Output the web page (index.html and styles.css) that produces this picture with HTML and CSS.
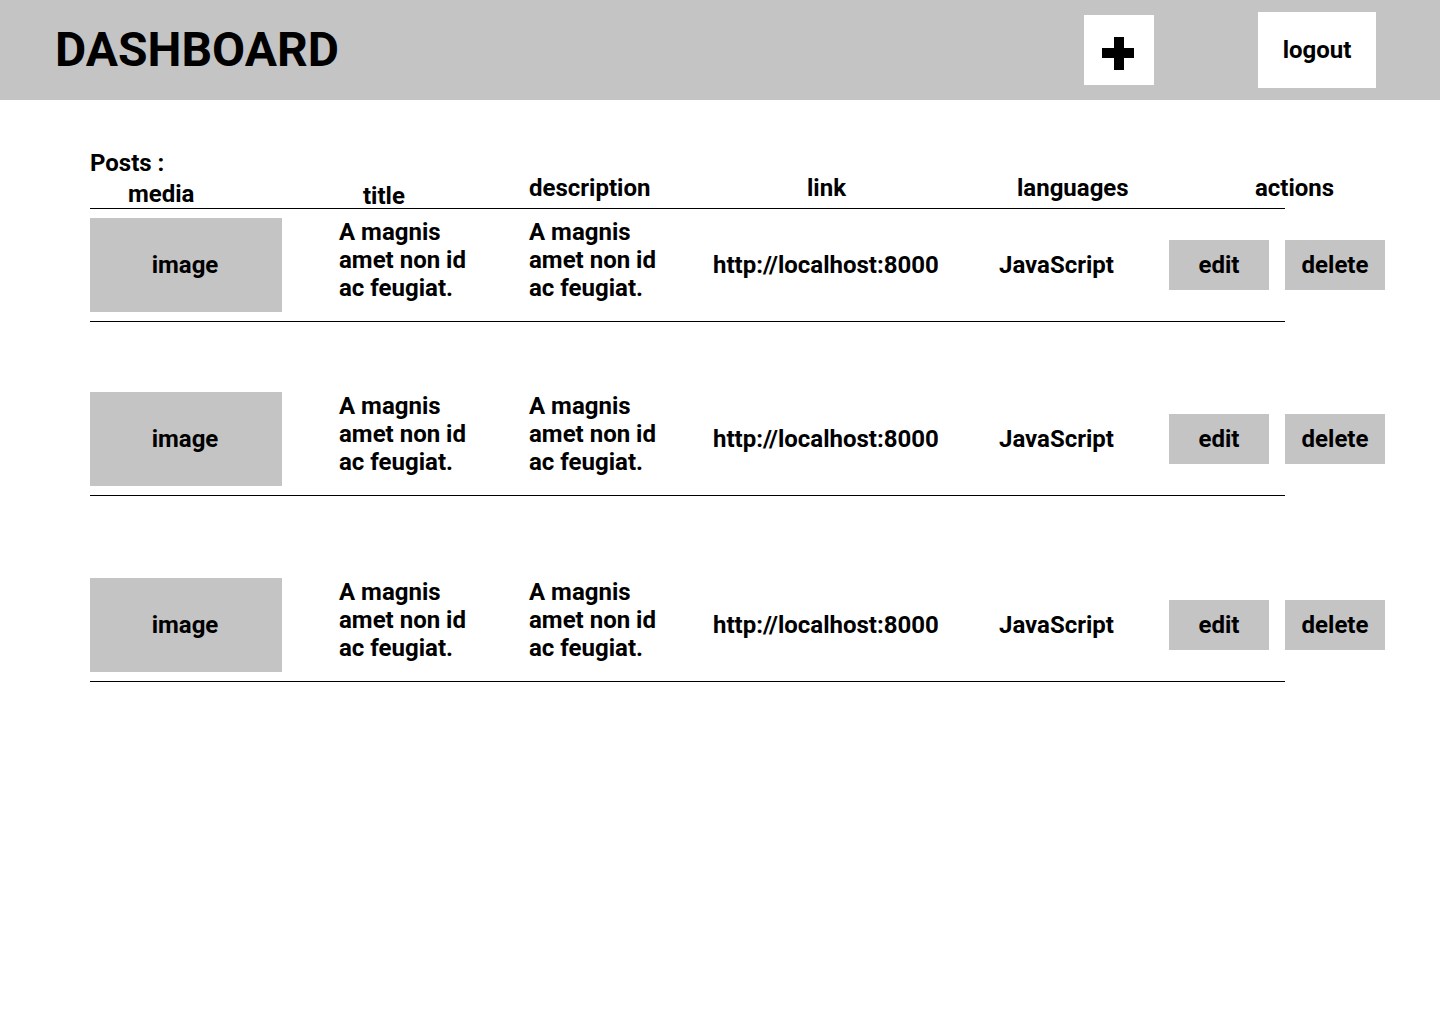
FILE: index.html
```html
<!DOCTYPE html>
<html lang="en">
<head>
<meta charset="utf-8">
<title>Dashboard</title>
<link rel="stylesheet" href="styles.css">
</head>
<body>
<header class="topbar">
  <h1 class="brand">DASHBOARD</h1>
  <div class="topbar-actions">
    <button class="add-btn" aria-label="add">
      <svg class="plus" width="32" height="33" viewBox="0 0 32 33"><rect x="12" y="0" width="10" height="33" fill="#000"/><rect x="0" y="11" width="32" height="10" fill="#000"/></svg>
    </button>
    <button class="logout-btn">logout</button>
  </div>
</header>
<main class="content">
  <div class="posts-label">Posts :</div>
  <div class="table">
    <div class="thead">
      <div class="th th-media">media</div>
      <div class="th th-title">title</div>
      <div class="th th-desc">description</div>
      <div class="th th-link">link</div>
      <div class="th th-lang">languages</div>
      <div class="th th-actions">actions</div>
    </div>
    <div class="row">
      <div class="media-box">image</div>
      <div class="cell-text">A magnis<br>amet non id<br>ac feugiat.</div>
      <div class="cell-text">A magnis<br>amet non id<br>ac feugiat.</div>
      <div class="cell-single">http://localhost:8000</div>
      <div class="cell-single">JavaScript</div>
      <button class="act-btn">edit</button>
      <button class="act-btn">delete</button>
    </div>
    <div class="row row-second">
      <div class="media-box">image</div>
      <div class="cell-text">A magnis<br>amet non id<br>ac feugiat.</div>
      <div class="cell-text">A magnis<br>amet non id<br>ac feugiat.</div>
      <div class="cell-single">http://localhost:8000</div>
      <div class="cell-single">JavaScript</div>
      <button class="act-btn">edit</button>
      <button class="act-btn">delete</button>
    </div>
    <div class="row row-third">
      <div class="media-box">image</div>
      <div class="cell-text">A magnis<br>amet non id<br>ac feugiat.</div>
      <div class="cell-text">A magnis<br>amet non id<br>ac feugiat.</div>
      <div class="cell-single">http://localhost:8000</div>
      <div class="cell-single">JavaScript</div>
      <button class="act-btn">edit</button>
      <button class="act-btn">delete</button>
    </div>
  </div>
</main>
</body>
</html>
```
FILE: styles.css
```css
* { box-sizing: border-box; }
html, body { margin: 0; padding: 0; background: #fff; }
body {
  font-family: Roboto, "Liberation Sans", sans-serif;
  font-weight: 700;
  font-size: 24px;
  color: #000;
  width: 1440px;
  min-height: 1024px;
}
button {
  font: inherit;
  color: inherit;
  border: 0;
  padding: 0;
  margin: 0;
  cursor: pointer;
}

.topbar {
  height: 100px;
  background: #c4c4c4;
  display: flex;
  align-items: center;
  justify-content: space-between;
  padding: 0 64px 0 55px;
}
.brand {
  margin: 0;
  font-size: 48px;
  font-weight: 700;
  line-height: 56px;
}
.topbar-actions {
  display: flex;
  align-items: center;
  gap: 104px;
}
.add-btn {
  width: 70px;
  height: 70px;
  background: #fff;
  display: flex;
  align-items: center;
  justify-content: center;
}
.plus { display: block; margin-top: 6px; margin-left: -2px; }
.logout-btn {
  width: 118px;
  height: 76px;
  background: #fff;
  line-height: 28px;
}

.content {
  padding: 51px 0 0 90px;
}
.posts-label {
  line-height: 24px;
}
.table { width: 1195px; }
.thead {
  height: 34px;
  border-bottom: 1px solid #000;
  display: grid;
  grid-template-columns: 249px 190px 184px 286px 170px 116px;
  align-items: start;
  line-height: 24px;
}
.th-media { padding: 7px 0 0 38px; }
.th-title { padding: 9px 0 0 24px; }
.th-desc { padding-top: 1px; }
.th-link { padding: 1px 0 0 94px; }
.th-lang { padding: 1px 0 0 18px; }
.th-actions { padding: 1px 0 0 86px; white-space: nowrap; }

.row {
  width: 1195px;
  display: grid;
  grid-template-columns: 249px 190px 184px 286px 170px 116px 100px;
  align-items: center;
  padding: 9px 0;
  border-bottom: 1px solid #000;
  line-height: 28px;
}
.row-second { margin-top: 61px; }
.row-third { margin-top: 73px; }
.media-box {
  width: 192px;
  height: 94px;
  background: #c4c4c4;
  display: flex;
  align-items: center;
  justify-content: center;
  padding-right: 2px;
}
.cell-text { align-self: start; }
.cell-single { white-space: nowrap; }
.act-btn {
  width: 100px;
  height: 50px;
  background: #c4c4c4;
  line-height: 28px;
}
```
